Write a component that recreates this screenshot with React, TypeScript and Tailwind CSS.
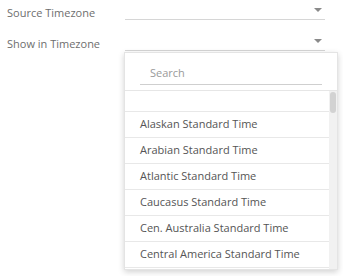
import React from "react";

const zones = [
  "",
  "Alaskan Standard Time",
  "Arabian Standard Time",
  "Atlantic Standard Time",
  "Caucasus Standard Time",
  "Cen. Australia Standard Time",
  "Central America Standard Time",
];

const Arrow = () => (
  <svg width="8" height="4" viewBox="0 0 8 4" className="mr-[3px]">
    <path d="M0 0 L8 0 L4 4 Z" fill="#8a8a8a" />
  </svg>
);

const Field: React.FC<{ label: string; children?: React.ReactNode }> = ({ label, children }) => (
  <div className="flex h-[31px] items-start">
    <div className="w-[118px] whitespace-nowrap pt-[5px] text-[11px] leading-[16px] text-[#6e6e6e]">{label}</div>
    <div className="relative w-[200px]">
      <div className="flex h-[20px] items-center justify-end border-b border-[#d6d6d6]">
        <Arrow />
      </div>
      {children}
    </div>
  </div>
);

export default function App() {
  return (
    <div
      className="relative h-[276px] w-[343px] overflow-hidden bg-white pl-[7px]"
      style={{ fontFamily: "'Open Sans', 'Noto Sans', sans-serif" }}
    >
      <Field label="Source Timezone" />
      <Field label="Show in Timezone">
        <div className="absolute left-[-1px] top-[21px] z-10 flex h-[218px] w-[214px] flex-col border border-[#e4e4e4] bg-white shadow-[0_2px_6px_rgba(0,0,0,0.18)]">
          <div className="border-b border-[#e6e6e6] px-[15px] pt-[11px] pb-[5px]">
            <div className="border-b border-[#cfcfcf] pl-[10px] pb-[2px] text-[11px] leading-[18px] text-[#9a9a9a]">
              Search
            </div>
          </div>
          <div className="flex flex-1 overflow-hidden">
            <div className="flex-1">
              {zones.map((z, i) => (
                <div
                  key={i}
                  className={`flex items-center whitespace-nowrap border-b border-[#e8e8e8] px-[15px] text-[11px] text-[#555555] ${i === 0 ? "h-[21px]" : "h-[26px]"}`}
                >
                  {z}
                </div>
              ))}
            </div>
            <div className="w-[8px] bg-[#f1f1f1] pt-[1px]">
              <div className="ml-[1px] h-[21px] w-[6px] rounded-[3px] bg-[#d2d2d2]" />
            </div>
          </div>
        </div>
      </Field>
    </div>
  );
}
